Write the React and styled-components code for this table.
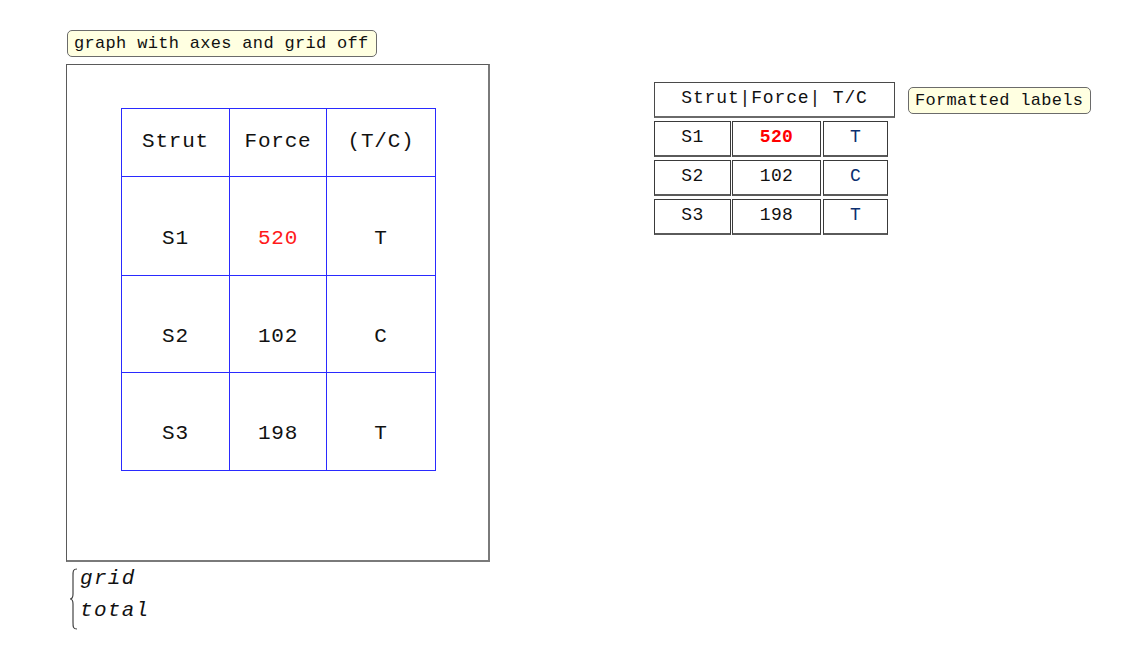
import React from 'react'
import styled, { createGlobalStyle } from 'styled-components'

const GlobalStyle = createGlobalStyle`
  html, body {
    margin: 0;
    padding: 0;
    background: #fff;
  }
  body {
    font-family: "Courier New", "Nimbus Mono PS", "FreeMono", "Liberation Mono", monospace;
    color: #111;
  }
`

const bigRows = [
  { strut: 'S1', force: '520', tc: 'T', hot: true },
  { strut: 'S2', force: '102', tc: 'C' },
  { strut: 'S3', force: '198', tc: 'T' },
]

function Brace() {
  return (
    <svg width="9" height="62" viewBox="0 0 9 62">
      <path
        d="M8 1 C4 1 4 3 4 8 L4 26 C4 29 3 31 1 31 C3 31 4 33 4 36 L4 54 C4 59 4 61 8 61"
        fill="none"
        stroke="#444"
        strokeWidth="1.2"
      />
    </svg>
  )
}

export default function App() {
  return (
    <>
      <GlobalStyle />
      <Sheet>
        <LeftColumn>
          <Note>graph with axes and grid off</Note>
          <GraphFrame>
            <BlueTable>
              <HeadCell>Strut</HeadCell>
              <HeadCell>Force</HeadCell>
              <HeadCell>(T/C)</HeadCell>
              {bigRows.map((r) => (
                <React.Fragment key={r.strut}>
                  <DataCell>{r.strut}</DataCell>
                  <DataCell $red={r.hot}>{r.force}</DataCell>
                  <DataCell>{r.tc}</DataCell>
                </React.Fragment>
              ))}
            </BlueTable>
          </GraphFrame>
          <Annotation>
            <Brace />
            <VarList>
              <span>grid</span>
              <span>total</span>
            </VarList>
          </Annotation>
        </LeftColumn>

        <RightArea>
          <SmallTable>
            <HeaderBox>Strut|Force| T/C</HeaderBox>
            {bigRows.map((r) => (
              <SmallRow key={r.strut}>
                <SmallCell $w={77}>{r.strut}</SmallCell>
                <SmallCell $w={89} $bold={r.hot}>{r.force}</SmallCell>
                <SmallCell $w={65} $tc>{r.tc}</SmallCell>
              </SmallRow>
            ))}
          </SmallTable>
          <SideNote>Formatted labels</SideNote>
        </RightArea>
      </Sheet>
    </>
  )
}

const Sheet = styled.div`
  display: flex;
  align-items: flex-start;
  padding: 30px 0 0 66px;
  width: 1145px;
  height: 648px;
  box-sizing: border-box;
`

const LeftColumn = styled.div`
  display: flex;
  flex-direction: column;
  align-items: flex-start;
`

const Note = styled.div`
  margin-left: 1px;
  height: 27px;
  box-sizing: border-box;
  padding: 0 7px 0 6px;
  display: flex;
  align-items: center;
  background: #ffffe1;
  border: 1px solid #6b6b6b;
  border-radius: 5px;
  font-size: 17px;
  letter-spacing: 0.32px;
  color: #111;
  white-space: pre;
`

const GraphFrame = styled.div`
  margin-top: 7px;
  width: 424px;
  height: 498px;
  box-sizing: border-box;
  border: 1px solid #5a5a5a;
  border-right: 2px solid #7a7a7a;
  border-bottom: 2px solid #7a7a7a;
  padding: 43px 0 0 54px;
`

const BlueTable = styled.div`
  display: grid;
  grid-template-columns: 108px 97px 109px;
  grid-template-rows: 68px 99px 97px 98px;
  width: 315px;
  box-sizing: border-box;
  border-top: 1px solid #2a2aff;
  border-left: 1px solid #2a2aff;
  font-size: 21px;
  letter-spacing: 0.8px;
`

const HeadCell = styled.div`
  display: flex;
  align-items: center;
  justify-content: center;
  padding: 0 0 2px 0;
  border-right: 1px solid #2a2aff;
  border-bottom: 1px solid #2a2aff;
  color: #111;
`

const DataCell = styled(HeadCell)`
  padding: 24px 0 0 0;
  color: ${(p) => (p.$red ? '#ff1a1a' : '#111')};
`

const Annotation = styled.div`
  display: flex;
  align-items: flex-start;
  margin: 6px 0 0 3px;
`

const VarList = styled.div`
  display: flex;
  flex-direction: column;
  margin-left: 2px;
  font-size: 21px;
  font-style: italic;
  letter-spacing: 1.3px;
  line-height: 32px;
  margin-top: -5px;
  color: #111;
`

const RightArea = styled.div`
  display: flex;
  align-items: flex-start;
  margin: 52px 0 0 164px;
`

const SmallTable = styled.div`
  display: flex;
  flex-direction: column;
  gap: 3px;
  font-size: 18px;
  letter-spacing: 0.85px;
`

const HeaderBox = styled.div`
  width: 241px;
  height: 36px;
  box-sizing: border-box;
  border: 1px solid #4a4a4a;
  border-bottom: 2px solid #6a6a6a;
  display: flex;
  align-items: center;
  justify-content: center;
  padding-bottom: 4px;
  white-space: pre;
  color: #111;
`

const SmallRow = styled.div`
  display: flex;
  gap: 1px;
`

const SmallCell = styled.div`
  width: ${(p) => p.$w}px;
  height: 36px;
  box-sizing: border-box;
  border: 1px solid #3a3a3a;
  border-bottom: 2px solid #5a5a5a;
  display: flex;
  align-items: center;
  justify-content: center;
  padding-bottom: 4px;
  letter-spacing: 0.4px;
  font-weight: ${(p) => (p.$bold ? 700 : 400)};
  color: ${(p) => (p.$bold ? '#ff0000' : p.$tc ? '#0b2f70' : '#111')};
  &:last-child {
    margin-left: 1px;
  }
`

const SideNote = styled(Note)`
  margin: 5px 0 0 13px;
`
